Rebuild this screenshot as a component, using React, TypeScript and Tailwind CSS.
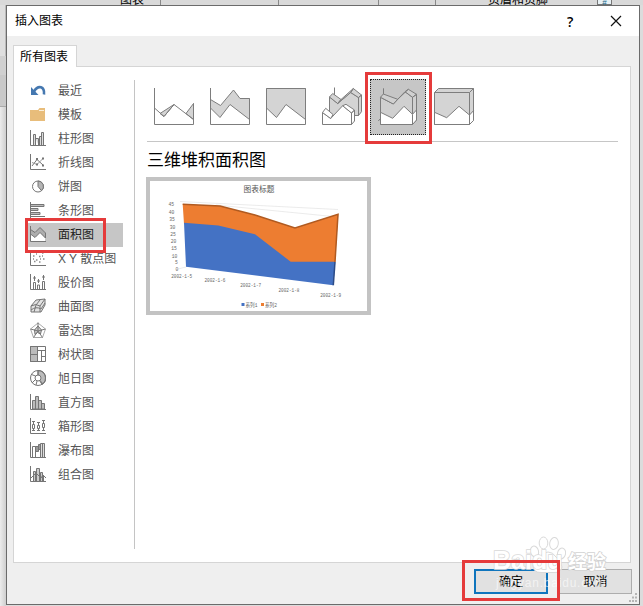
import type { ReactNode } from 'react'

type ChartType = {
    label: string
    icon: ReactNode
}

const axes = <path d="M.5 0v15.5H16" />

const CHART_TYPES: ChartType[] = [
    {
        label: '最近',
        icon: (
            <>
                <path d="M4 9.5Q7 4.300 11 5.300Q14.600 6.500 14 12.500" stroke="#4578b0" strokeWidth="2.6" />
                <path d="M1 5v8h7.5z" fill="#4578b0" stroke="none" />
            </>
        ),
    },
    {
        label: '模板',
        icon: (
            <>
                <path d="M0 15V4h8l1.5-2H15V15z" fill="#e8bd7b" stroke="none" />
                <path d="M9 4.500h5" stroke="#fbefd9" />
            </>
        ),
    },
    {
        label: '柱形图',
        icon: (
            <>
                {axes}
                <path d="M3.5 15V4.5h2V15M5.5 8.500h3V15M9.500 15V6.500h2V15M11.500 15V2.500h2V15" fill="#ddd" />
            </>
        ),
    },
    {
        label: '折线图',
        icon: (
            <>
                {axes}
                <path d="M2 12L7 5.500L13 11" />
                <path d="M2 8.500L7 10.500L13 4.500" stroke="#999" />
                <path d="M6 5h2M12 4.500h2M12 11.500h2M6 10.500h2" strokeWidth="2" />
            </>
        ),
    },
    {
        label: '饼图',
        icon: (
            <>
                <circle cx="8" cy="8.500" r="5.500" />
                <path d="M8 8.500V3A5.500 5.500 0 0 1 11.500 12.700z" fill="#b5b5b5" />
            </>
        ),
    },
    {
        label: '条形图',
        icon: (
            <>
                <path d="M.5 0v16" />
                <path d="M1 2.500h13v2H1M1 6.500h7v2H1M1 10.500h9v2H1M1 14.500h14" fill="#bbb" />
            </>
        ),
    },
    {
        label: '面积图',
        icon: (
            <>
                <path d="M1 15V8l4 3 5-5 5 6v3z" fill="#fff" stroke="none" />
                <path d="M.5 3.500L5 6.500 10 1.500 15.500 7V12L10 6.500 5 11.500.5 8z" fill="#adadad" />
                {axes}
            </>
        ),
    },
    {
        label: 'X Y 散点图',
        icon: (
            <>
                {axes}
                <path
                    d="M3 6h1.500M6 10h1.500M9 6.500h1.500M12 3h1.500M13 9h1.500M4 11.500h1.500M9 12h1.500M6 4h1M12 6h1M3 9h1M10 9h1"
                    strokeWidth="1.5"
                    stroke="#8a8a8a"
                />
            </>
        ),
    },
    {
        label: '股价图',
        icon: (
            <>
                {axes}
                <path d="M3.500 15V8.500h2V15M7.500 15v-4h2v4M12.500 15V7.500h2V15" />
                <path d="M4.500 2v5M8.500 5v4M13.500 1v5M3 4h3M7 7h3M12 3h3" />
            </>
        ),
    },
    {
        label: '曲面图',
        icon: (
            <>
                <path d="M1 8l5-6 9-1v6l-4 7H1z" fill="#e2e2e2" />
                <path d="M1 8q5-3 9 0l5-7M1 12q5-4 10-1l4-6M4 14l2-7 4-5M10 8v6" />
            </>
        ),
    },
    {
        label: '雷达图',
        icon: (
            <>
                <path d="M8 1L15.500 7 12.500 15.500H3.500L.5 7z" stroke="#aaa" />
                <path d="M8 4l3.500 4-1 4-3-1.500L5 12.500 4.500 8z" fill="#ccc" />
                <path d="M8 .5V9M.5 7L8 9l7.500-2M3.500 15.500L8 9l4.500 6.500" />
            </>
        ),
    },
    {
        label: '树状图',
        icon: (
            <>
                <path d="M.5.5h7v15h-7z" fill="#bbb" />
                <path d="M.5.5h15v15H.5zM7.500.5v15M.5 8.500h7M7.500 4.500h8M11.500 4.500v11M11.500 10.500h4" />
            </>
        ),
    },
    {
        label: '旭日图',
        icon: (
            <>
                <path d="M8 .5A7.500 7.500 0 0 1 12 14.500L8 8z" fill="#bbb" />
                <circle cx="8" cy="8" r="7.500" />
                <circle cx="8" cy="8" r="3" fill="#fff" />
                <path d="M8 .5V5M10 10.500l3 3.500M5.500 9.500L2 13M5.500 6L1.500 4.500M7 11l-1 4" />
            </>
        ),
    },
    {
        label: '直方图',
        icon: (
            <>
                {axes}
                <path d="M2.500 15V6.500h3V15zM5.500 15V2.500h3V15zM8.500 15V6.500h3V15zM11.500 15V9.500h3V15z" fill="#bbb" />
            </>
        ),
    },
    {
        label: '箱形图',
        icon: (
            <>
                {axes}
                <path d="M2.500 6.500h2v4h-2zM7.500 7.500h2v3h-2zM12.500 5.500h2v4h-2z" />
                <path d="M3.500 3v3M3.500 11v2M8.500 4v3M8.500 11v2M13.500 2v3M13.500 10v3M2 3.500h3M7 4.500h3M12 2.500h3M2 12.500h3M7 12.500h3M12 12.500h3" />
            </>
        ),
    },
    {
        label: '瀑布图',
        icon: (
            <>
                {axes}
                <path d="M2.500 15V4.500h3V15" />
                <path d="M5.500 4.500h3v5h-3zM8.500 2.500h2v5h-2z" fill="#999" />
                <path d="M10.500 15V1.500h4V15M12.500 2v13" fill="#ddd" />
            </>
        ),
    },
    {
        label: '组合图',
        icon: (
            <>
                {axes}
                <path d="M3.500 15V5.500h2V15M6.500 15V2.500h3V15M10.500 15V6.500h2V15M13.500 15V9" fill="#ccc" />
                <path d="M1 12L6 7l5 5 2-3 3 3" />
            </>
        ),
    },
]

// 40x37 drawings, one per area chart variant
const SUBTYPES: ReactNode[] = [
    <>
        <path d="M6 25.500L20 16.500 10 28.500zM32 25.500L39.500 15.500V31.500z" fill="#d4d4d4" />
        <path d="M.5 20L10 28.500 20 16.500 39.500 31.500M.5 0v36.500h39V15.500" />
    </>,
    <>
        <path d="M.5 11.500L10.500 17.500 23.500 2 30 10.500h9.500v21L20 16.500 10 29.500.5 20z" fill="#d4d4d4" />
        <path d="M.5 0v36.500h39v-26" />
    </>,
    <>
        <path d="M.5.500h39V31.500L20 16.500 10.500 29.500.5 20z" fill="#d4d4d4" />
        <path d="M.5.500v36h39v-36" />
    </>,
    <>
        <path d="M12.500-.5V7" />
        <path d="M7.500 9L15.700 15.500 28.700 4.500 36.500 9.500V27.500H7.500z" fill="#d4d4d4" />
        <path d="M7.500 9L10.700 5.500 19 11.500 15.700 15.500zM15.700 15.500L19 11.500 31.300.5 28.700 4.500zM28.700 4.500L31.300.5 39.500 7 36.500 9.500zM36.500 9.500L39.500 7V23.700L36.500 27.500z" fill="#d4d4d4" />
        <path d="M.5 24.500L8.700 30.500 20.700 17.700 29.500 25V36.500H.5z" fill="#fff" />
        <path d="M.5 24.500L3.700 20.300 11 26.500 8.700 30.500zM20.700 17.700L24 16.300 32.500 22 29.500 25zM29.500 25L32.500 22V33L29.500 36.500z" fill="#fff" />
    </>,
    <>
        <path d="M5.500.3V6.500M.3 33L2.500 30.500" />
        <path d="M2.500 9.300L15.300 16 27 3.700 34.500 9.300V36.500h-32z" fill="#d0d0d0" />
        <path d="M2.500 9.300L5.300 6 19.700 11.300 15.300 16zM27 3.700L30.300 1.300 38.500 6.300 34.500 9.300zM34.500 9.300L38.500 6.300V32L34.500 36.500z" fill="#d0d0d0" />
        <path d="M19.700 11.300L30.300 1.300" />
        <path d="M2.500 24.300L14.700 30.300 26 18.300 34.500 26.300V36.500h-32z" fill="#fff" />
        <path d="M34.500 26.300L38.500 22V32L34.500 36.500z" fill="#fff" />
    </>,
    <>
        <path d="M.5 4.500L4.500.5h35V32.500L35.500 36.500H.5z" fill="#d4d4d4" />
        <path d="M.5 24.300L12.700 29.700 25 18.300 35.500 27V36.500H.5z" fill="#fff" />
        <path d="M35.500 27L39.500 22.700V32.500L35.500 36.500z" fill="#fff" />
        <path d="M.5 4.500h35v32M35.500 4.500L39.500.5" />
    </>,
]

const SELECTED_TYPE = 6
const SELECTED_SUBTYPE = 4

const Y_TICKS = [
    { value: 45, x: 24, y: 25.3 },
    { value: 40, x: 24.3, y: 33 },
    { value: 35, x: 24.8, y: 40.3 },
    { value: 30, x: 25.3, y: 47.5 },
    { value: 25, x: 25.8, y: 55 },
    { value: 20, x: 26.3, y: 62.2 },
    { value: 15, x: 26.8, y: 69.4 },
    { value: 10, x: 27.3, y: 76.5 },
    { value: 5, x: 27.8, y: 83.2 },
    { value: 0, x: 28.3, y: 90.2 },
]

const X_LABELS = [
    { label: '2002-1-5', x: 31.7, y: 96.5 },
    { label: '2002-1-6', x: 65, y: 100.5 },
    { label: '2002-1-7', x: 100.7, y: 105.5 },
    { label: '2002-1-8', x: 139, y: 110.5 },
    { label: '2002-1-9', x: 180.7, y: 115.5 },
]

function ChartPreview() {
    return (
        <div className="mt-[4px] -ml-px h-[138px] w-[225px] border-4 border-[#c3c3c3] bg-white">
            <svg width="217" height="130" viewBox="0 0 217 130" fontFamily="Liberation Mono, Noto Sans CJK SC, monospace" fill="#666">
                <text x="109" y="11" textAnchor="middle" fontSize="7.700" fill="#555" fontFamily="Noto Sans CJK SC, sans-serif">图表标题</text>
                <path d="M30 20.500L188 28.500M66 24L188 36M28 88L36 86" stroke="#ddd" strokeWidth=".6" fill="none" />
                <path d="M32.700 23.300L70 25 105 34 145 47 188.300 33 185 81 141 82 105 55 34 43z" fill="#ed7d31" />
                <path d="M34 41.700L68.300 44.500 105 53.300 140.700 80.700H185L183.300 104.300 36 85.700z" fill="#4472c4" />
                <path d="M32.700 23.300L70 25 105 34 145 47 188 33.300 185 81" stroke="#b05a20" strokeWidth="1.500" fill="none" />
                <path d="M185 81L183.300 104.300" stroke="#2c4b86" strokeWidth="1.500" />
                {Y_TICKS.map(t => (
                    <text
                        key={t.value}
                        x={t.x}
                        y={t.y}
                        textAnchor="end"
                        fontSize="6"
                        textLength={t.value > 9 ? 5.6 : 2.8}
                        lengthAdjust="spacingAndGlyphs"
                    >
                        {t.value}
                    </text>
                ))}
                {X_LABELS.map(l => (
                    <text key={l.label} x={l.x} y={l.y} textAnchor="middle" fontSize="6" textLength="21" lengthAdjust="spacingAndGlyphs">{l.label}</text>
                ))}
                <path d="M91.500 122h3v3h-3z" fill="#4472c4" />
                <text x="95.500" y="125.500" fontSize="5.500" textLength="12" lengthAdjust="spacingAndGlyphs">系列1</text>
                <path d="M111 122h3v3h-3z" fill="#ed7d31" />
                <text x="115" y="125.500" fontSize="5.500" textLength="12" lengthAdjust="spacingAndGlyphs">系列2</text>
            </svg>
        </div>
    )
}

function Watermark() {
    return (
        <div className="pointer-events-none absolute left-[493px] top-[536px] h-[60px] w-[120px] text-white">
            <svg className="absolute left-[36px] top-0" width="38" height="38" viewBox="0 0 38 38" fill="#fff" stroke="#d9d9d9">
                <ellipse cx="5.500" cy="15.500" rx="4" ry="5.500" transform="rotate(-15 5.500 15.500)" />
                <ellipse cx="14.500" cy="7" rx="4.300" ry="6" />
                <ellipse cx="25" cy="7.500" rx="4.300" ry="6" transform="rotate(10 25 7.500)" />
                <ellipse cx="32.500" cy="17.500" rx="4" ry="5.500" transform="rotate(15 32.500 17.500)" />
                <path d="M19 16q5 0 8 5 6 5 6 10-1 6-8 5.500H12q-8 0-8-7 1-4 6-8 4-5.500 9-5.500z" />
            </svg>
            <span
                className="absolute left-0 top-[12px] text-[25px] leading-[25px] font-bold [paint-order:stroke]"
                style={{ WebkitTextStroke: '1.5px #d9d9d9' }}
            >
                Baidu
            </span>
            <span
                className="absolute left-[75px] top-[15px] text-[19px] leading-[24px] font-bold whitespace-nowrap [paint-order:stroke]"
                style={{ WebkitTextStroke: '1.5px #d2d2d2' }}
            >
                经验
            </span>
            <span className="absolute left-[3px] top-[40px] text-[12px] leading-[14px] tracking-[0.8px] text-white/60">jingyan.baidu.com</span>
        </div>
    )
}

export default function App() {
    return (
        <div
            className="relative flex h-[606px] w-[643px] overflow-hidden bg-[#dcdcdc] text-[12px] text-black"
            style={{ fontFamily: '"Liberation Sans", "Noto Sans CJK SC", sans-serif' }}
        >
            {/* Host window showing behind the dialog */}
            <div className="absolute inset-x-0 top-0 flex h-[5px] overflow-hidden bg-[#d9d9d9] leading-[5px]">
                <div className="w-[161px] border-r border-[#888]" />
                <div className="w-[118px] border-r border-[#888]" />
                <div className="w-[100px] border-r border-[#888]" />
                <div className="w-[57px] border-r border-[#888]" />
                <div className="ml-[161px] h-[5px] w-[15px] border-x border-b border-[#777] bg-[#e7f0f4] text-center text-[8px] text-[#256b8b]">#</div>
            </div>
            <div className="absolute left-[120px] top-[-7px] h-[12px] overflow-hidden text-[12px] leading-[14px]">图表</div>
            <div className="absolute left-[488px] top-[-7px] h-[12px] overflow-hidden text-[12px] leading-[14px]">页眉和页脚</div>
            <div className="flex w-[6px] shrink-0 flex-col bg-[#e8e8e8]">
                <div className="h-[56px] border-r border-[#bbb] bg-[#dedede]" />
                <div className="h-[19px] bg-[#d0d0d0]" />
                <div className="h-[32px] border-b border-[#aaa] bg-[#c9c9c9]" />
                <div className="flex-1 bg-linear-to-r from-[#ececec] to-[#cfcfcf]" />
            </div>

            <div className="mt-[5px] flex h-[600px] w-[634px] shrink-0 flex-col border border-[#6b6b6b] bg-[#efefef]">
                <div className="flex h-[30px] shrink-0 items-center bg-white pl-2">
                    <span className="flex-1">插入图表</span>
                    <span className="w-[7px] text-[14px] font-semibold" style={{ fontFamily: '"Open Sans", sans-serif' }}>?</span>
                    <svg className="ml-[36px] mr-[17px]" width="12" height="12" viewBox="0 0 12 12" stroke="#111" strokeWidth="1.2">
                        <path d="M1 1l10 10M11 1L1 11" />
                    </svg>
                </div>

                <div className="px-[6px] pt-[9px]">
                    <div className="relative -mb-px flex h-[22px] w-[64px] items-center border border-b-0 border-[#d5d5d5] bg-white pl-[6px]">所有图表</div>
                    <div className="flex h-[497px] w-[618px] border border-[#d5d5d5] bg-white pl-[12px] pt-[12px]">
                        <ul className="w-[97px] shrink-0 text-[#555]">
                            {CHART_TYPES.map((type, i) => (
                                <li
                                    key={type.label}
                                    className={
                                        i === SELECTED_TYPE
                                            ? 'flex h-6 items-center gap-3 bg-[#c6c6c6] pl-1 text-[#222]'
                                            : 'flex h-6 items-center gap-3 pl-1'
                                    }
                                >
                                    <svg className="mb-[2px] shrink-0" width="16" height="16" viewBox="0 0 16 16" fill="none" stroke="#757575">
                                        {type.icon}
                                    </svg>
                                    <span className="whitespace-nowrap">{type.label}</span>
                                </li>
                            ))}
                        </ul>

                        <div className="mt-px ml-[11px] h-[469px] w-px bg-[#c4c4c4]" />

                        <div className="ml-[12px] w-[471px]">
                            <div className="-ml-px flex h-[62px]">
                                {SUBTYPES.map((icon, i) => (
                                    <div
                                        key={i}
                                        className={
                                            i === SELECTED_SUBTYPE
                                                ? 'flex size-[56px] items-center justify-center bg-[#c6c6c6] pb-px outline-1 -outline-offset-1 outline-dotted outline-[#222]'
                                                : 'flex size-[56px] items-center justify-center pb-px'
                                        }
                                    >
                                        <svg className="overflow-visible" width="40" height="37" viewBox="0 0 40 37" fill="none" stroke="#7d7d7d">
                                            {icon}
                                        </svg>
                                    </div>
                                ))}
                            </div>
                            <div className="h-px bg-[#c6c6c6]" />
                            <h2 className="mt-[7px] h-[24px] text-[17px] leading-[24px]">三维堆积面积图</h2>
                            <ChartPreview />
                        </div>
                    </div>
                </div>

                <div className="mt-[6px] mr-[7px] flex justify-end gap-[11px]">
                    <button className="h-[25px] w-[74px] border-2 border-[#0f75bd] bg-[#e1e1e1]">确定</button>
                    <button className="h-[25px] w-[73px] border border-[#adadad] bg-[#e1e1e1]">取消</button>
                </div>
            </div>

            {/* Resize grip */}
            <svg className="absolute left-[628px] top-[593px]" width="10" height="10" fill="#b5b5b5">
                <path d="M7 0h2v2H7zM4 3.500h2v2H4zM7 3.500h2v2H7zM1 7h2v2H1zM4 7h2v2H4zM7 7h2v2H7z" />
            </svg>

            <Watermark />

            {/* Highlight boxes */}
            <div className="absolute left-[365px] top-[72px] h-[72px] w-[67px] border-3 border-[#e53b3b]" />
            <div className="absolute left-[25px] top-[218px] h-[35px] w-[81px] border-3 border-[#e53b3b]" />
            <div className="absolute left-[462px] top-[560px] h-[41px] w-[98px] border-3 border-[#e53b3b]" />
        </div>
    )
}
